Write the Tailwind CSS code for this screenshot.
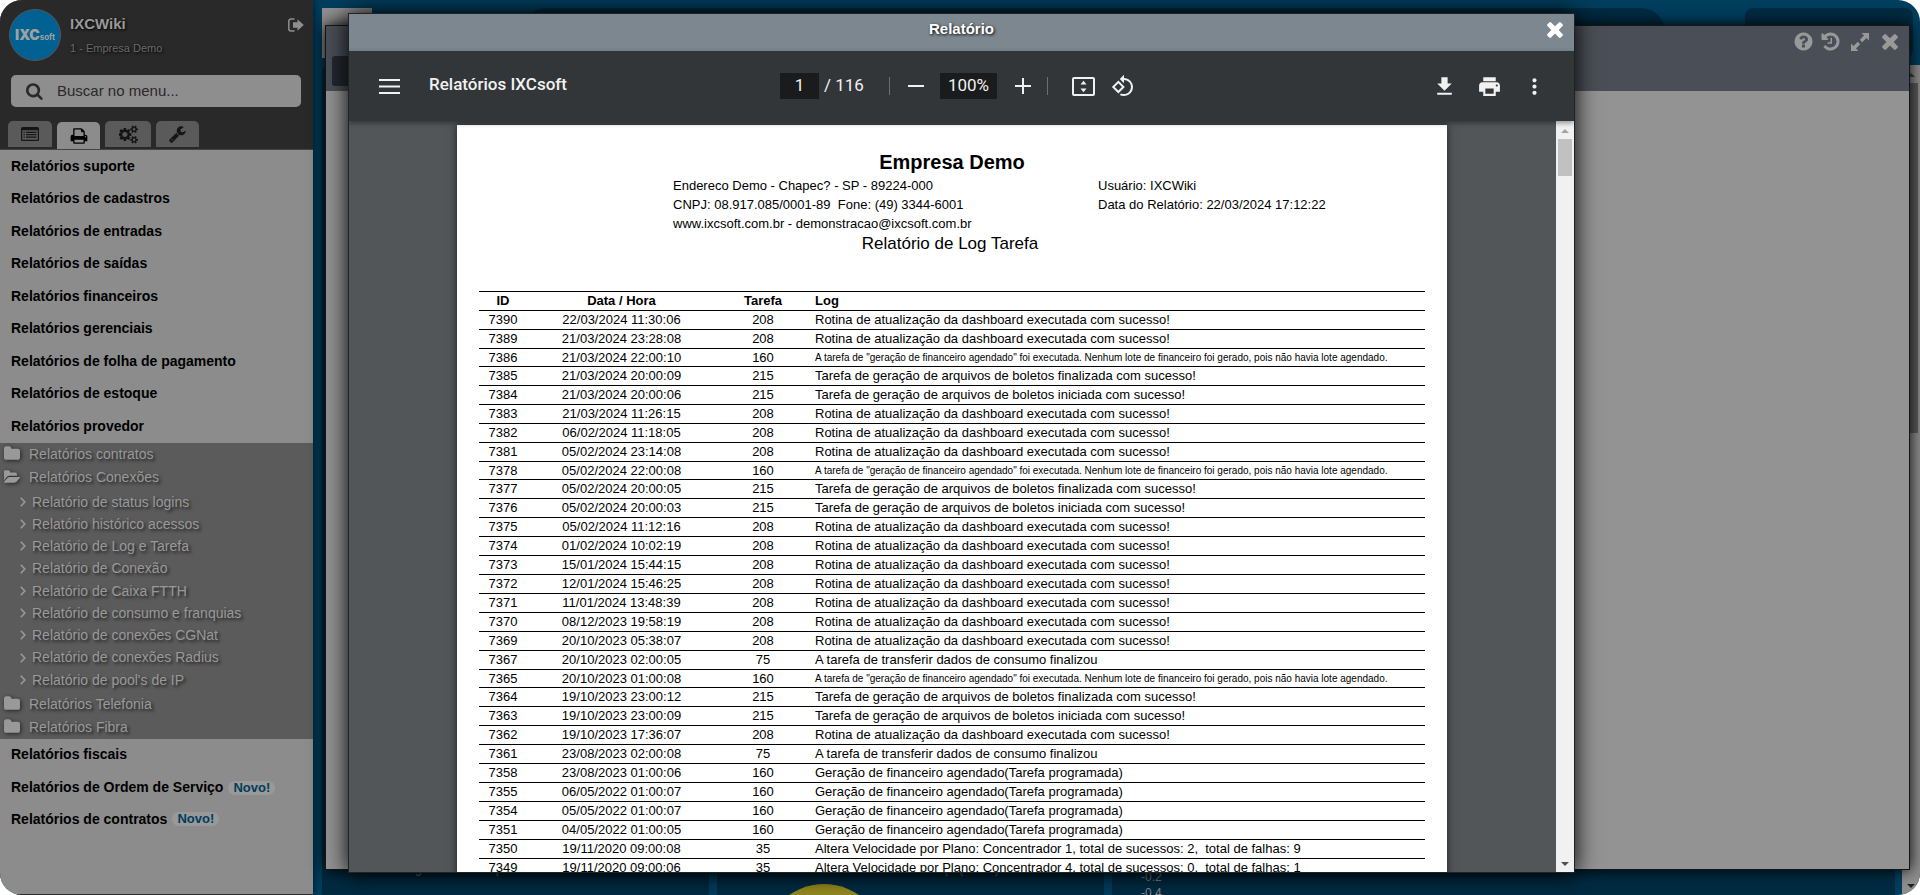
<!DOCTYPE html>
<html lang="pt-BR">
<head>
<meta charset="utf-8">
<title>Relatórios IXCsoft</title>
<script src="https://cdn.jsdelivr.net/npm/@tailwindcss/browser@4"></script>
</head>
<body class="bg-white font-['Liberation_Sans',Arial,sans-serif]">
<div class="relative flex h-screen overflow-hidden rounded-[22px] bg-[#003e5e]">

  <!-- Sidebar -->
  <aside class="relative z-10 flex w-[313px] shrink-0 flex-col border-b border-[#292929] bg-[#8c8c8c] shadow-[0_0_8px_#000a]">
    <header class="flex h-[149px] shrink-0 flex-col bg-[#292929]">
      <div class="flex items-start gap-[9px] pt-[9px] pr-[9px] pl-[9px]">
        <div class="flex size-[52px] items-center justify-center rounded-full border border-[#555] bg-[#006192] text-[#a0a0a0]">
          <span class="font-['Inter',sans-serif] text-[14px] leading-none font-black">IXC</span><span class="pt-1 font-['Inter',sans-serif] text-[8px] leading-none font-bold">soft</span>
        </div>
        <div class="flex-1 pt-[5px]">
          <h1 class="text-[15px] leading-5 font-bold text-[#999] [text-shadow:1px_1px_3px_#000]">IXCWiki</h1>
          <p class="pt-[6px] text-[11px] leading-4 text-[#6a6a6a] [text-shadow:1px_1px_3px_#000]">1 - Empresa Demo</p>
        </div>
        <button aria-label="Sair" class="mt-[8px]"><svg class="h-4 w-4 text-[#8e8e8e]" viewBox="0 0 16 16" fill="currentColor"><path d="M6.500 2H3A2.200 2.200 0 0 0 .8 4.200v7.600A2.200 2.200 0 0 0 3 14h3.500" fill="none" stroke="currentColor" stroke-width="1.500"/><path d="M5 5.200h4.500V2.200L15.800 8l-6.300 5.800V10.800H5z"/></svg></button>
      </div>
      <label class="mx-[11px] mt-[14px] flex h-[34px] w-[290px] items-center gap-[13px] rounded-[5px] bg-[#8e8e8e] pl-[15px]">
        <svg class="size-[18px] shrink-0 text-[#292929]" viewBox="0 0 1792 1792" fill="currentColor"><path d="M1152 832q0-185-131.500-316.500t-316.500-131.500-316.500 131.500-131.500 316.500 131.500 316.500 316.500 131.500 316.500-131.500 131.500-316.500zm512 832q0 52-38 90t-90 38q-54 0-90-38l-343-342q-179 124-399 124-143 0-273.500-55.500t-225-150-150-225-55.500-273.500 55.500-273.500 150-225 225-150 273.500-55.500 273.500 55.500 225 150 150 225 55.500 273.500q0 220-124 399l343 343q37 37 37 90z"/></svg>
        <input type="text" placeholder="Buscar no menu..." aria-label="Buscar no menu" class="min-w-0 flex-1 bg-transparent text-[15px] text-[#292929] outline-none placeholder:text-[#292929]">
      </label>
      <nav class="mt-[14px] flex items-start gap-[5px] pl-2 text-[#151515]">
        <button aria-label="Cadastros" class="flex h-[26px] w-11 items-center justify-center rounded-t-[5px] bg-[#5a5a5a]"><svg class="h-[14px] w-[18px]" viewBox="0 0 18 14" fill="currentColor"><path fill-rule="evenodd" d="M1.500 0h15A1.500 1.500 0 0 1 18 1.500v11a1.500 1.500 0 0 1-1.500 1.500h-15A1.500 1.500 0 0 1 0 12.500v-11A1.500 1.500 0 0 1 1.500 0zM1.200 3.200v9.200c0 .3.100.4.400.4h14.800c.3 0 .4-.1.400-.4V3.200z"/><path d="M2.500 4.700h1.300v1.200H2.500zM5 4.700h10.500v1.200H5zM2.500 7.100h1.300v1.200H2.500zM5 7.100h10.500v1.200H5zM2.500 9.500h1.300v1.200H2.500zM5 9.500h10.500v1.200H5z"/></svg></button>
        <button aria-label="Relatórios" class="relative mt-px flex h-[27px] w-[43px] items-center justify-center rounded-t-[5px] bg-[#8c8c8c] text-black"><svg class="size-[18px]" viewBox="-64 0 1792 1792" fill="currentColor"><path d="M384 1536h896v-256h-896v256zM384 896h896v-384h-160q-40 0-68-28t-28-68v-160h-640v640zM1536 960q0-26-19-45t-45-19-45 19-19 45 19 45 45 19 45-19 19-45zM1664 960v416q0 13-9.500 22.500t-22.500 9.500h-224v160q0 40-28 68t-68 28h-960q-40 0-68-28t-28-68v-160h-224q-13 0-22.500-9.500t-9.500-22.500v-416q0-79 56.500-135.500t135.500-56.500h64v-544q0-40 28-68t68-28h672q40 0 88 20t76 48l152 152q28 28 48 76t20 88v256h64q79 0 135.500 56.500t56.500 135.500z"/></svg></button>
        <button aria-label="Configurações" class="flex h-[26px] w-[46px] items-center justify-center rounded-t-[5px] bg-[#5a5a5a]"><svg class="size-[19px]" viewBox="0 0 1856 1792" fill="currentColor"><path d="M832 896q0-106-75-181t-181-75-181 75-75 181 75 181 181 75 181-75 75-181zm768 512q0-52-38-90t-90-38-90 38-38 90q0 53 37.500 90.500t90.500 37.500 90.500-37.500 37.500-90.500zm0-1024q0-52-38-90t-90-38-90 38-38 90q0 53 37.500 90.500t90.500 37.500 90.500-37.500 37.500-90.500zm-384 421v185q0 10-7 19.500t-16 10.500l-155 24q-11 35-32 76 34 48 90 115 7 11 7 20 0 12-7 19-23 30-82.500 89.500t-78.500 59.500q-11 0-21-7l-115-90q-37 19-77 31-11 108-23 155-7 24-30 24h-186q-11 0-20-7.500t-10-17.500l-23-153q-34-10-75-31l-118 89q-7 7-20 7-11 0-21-8-144-133-144-160 0-9 7-19 10-14 41-53t47-61q-23-44-35-82l-152-24q-10-1-17-9.500t-7-19.500v-185q0-10 7-19.500t16-10.500l155-24q11-35 32-76-34-48-90-115-7-11-7-20 0-12 7-20 22-30 82-89t79-59q11 0 21 7l115 90q34-18 77-32 11-108 23-154 7-24 30-24h186q11 0 20 7.500t10 17.500l23 153q34 10 75 31l118-89q8-7 20-7 11 0 21 8 144 133 144 160 0 8-7 19-12 16-42 54t-45 60q23 48 34 82l152 23q10 2 17 10.500t7 19.500zm640 533v140q0 16-149 31-12 27-30 52 51 113 51 138 0 4-4 7-122 71-124 71-8 0-46-47t-52-68q-20 2-30 2t-30-2q-14 21-52 68t-46 47q-2 0-124-71-4-3-4-7 0-25 51-138-18-25-30-52-149-15-149-31v-140q0-16 149-31 13-29 30-52-51-113-51-138 0-4 4-7 4-2 35-20t59-34 30-16q8 0 46 46.500t52 67.500q20-2 30-2t30 2q51-71 92-112l6-2q4 0 124 70 4 3 4 7 0 25-51 138 17 23 30 52 149 15 149 31zm0-1024v140q0 16-149 31-12 27-30 52 51 113 51 138 0 4-4 7-122 71-124 71-8 0-46-47t-52-68q-20 2-30 2t-30-2q-14 21-52 68t-46 47q-2 0-124-71-4-3-4-7 0-25 51-138-18-25-30-52-149-15-149-31v-140q0-16 149-31 13-29 30-52-51-113-51-138 0-4 4-7 4-2 35-20t59-34 30-16q8 0 46 46.500t52 67.500q20-2 30-2t30 2q51-71 92-112l6-2q4 0 124 70 4 3 4 7 0 25-51 138 17 23 30 52 149 15 149 31z"/></svg></button>
        <button aria-label="Ferramentas" class="flex h-[26px] w-[43px] items-center justify-center rounded-t-[5px] bg-[#5a5a5a]"><svg class="size-[18px]" viewBox="0 0 1792 1792" fill="currentColor"><path d="M384 1472q0-26-19-45t-45-19-45 19-19 45 19 45 45 19 45-19 19-45zm644-420l-682 682q-37 37-90 37-52 0-91-37l-106-108q-38-36-38-90 0-53 38-91l681-681q39 98 114.500 173.500t173.500 114.500zm634-435q0 39-23 106-47 134-164.500 217.500t-258.500 83.500q-185 0-316.500-131.500t-131.500-316.500 131.500-316.500 316.500-131.500q58 0 121.500 16.500t107.500 46.500q16 11 16 28t-16 28l-293 169v224l193 107q5-3 79-48.500t135.500-81 70.500-35.500q15 0 23.500 10t8.500 25z"/></svg></button>
      </nav>
    </header>

    <nav class="text-[14px]">
      <ul class="border-t border-[#444] font-bold text-black">
        <li class="odd:h-[33px] even:h-8"><a href="#" class="flex h-full items-center pb-px pl-[11px]">Relatórios suporte</a></li>
        <li class="odd:h-[33px] even:h-8"><a href="#" class="flex h-full items-center pb-px pl-[11px]">Relatórios de cadastros</a></li>
        <li class="odd:h-[33px] even:h-8"><a href="#" class="flex h-full items-center pb-px pl-[11px]">Relatórios de entradas</a></li>
        <li class="odd:h-[33px] even:h-8"><a href="#" class="flex h-full items-center pb-px pl-[11px]">Relatórios de saídas</a></li>
        <li class="odd:h-[33px] even:h-8"><a href="#" class="flex h-full items-center pb-px pl-[11px]">Relatórios financeiros</a></li>
        <li class="odd:h-[33px] even:h-8"><a href="#" class="flex h-full items-center pb-px pl-[11px]">Relatórios gerenciais</a></li>
        <li class="odd:h-[33px] even:h-8"><a href="#" class="flex h-full items-center pb-px pl-[11px]">Relatórios de folha de pagamento</a></li>
        <li class="odd:h-[33px] even:h-8"><a href="#" class="flex h-full items-center pb-px pl-[11px]">Relatórios de estoque</a></li>
        <li class="odd:h-[33px] even:h-8"><a href="#" class="flex h-full items-center pb-px pl-[11px]">Relatórios provedor</a></li>
      </ul>
      <ul id="submenu" class="bg-[#5b5b5b] text-[#999] [text-shadow:2px_2px_3px_#222]"></ul>
      <ul class="font-bold text-black">
        <li class="odd:h-[33px] even:h-8"><a href="#" class="flex h-full items-center pb-[3px] pl-[11px]">Relatórios fiscais</a></li>
        <li class="odd:h-[33px] even:h-8"><a href="#" class="flex h-full items-center gap-[5px] pb-px pl-[11px]">Relatórios de Ordem de Serviço <span class="rounded-full bg-[#999] px-[5px] text-[13px] leading-[14px] text-[#003c5c]">Novo!</span></a></li>
        <li class="odd:h-[33px] even:h-8"><a href="#" class="flex h-full items-center gap-[5px] pb-[3px] pl-[11px]">Relatórios de contratos <span class="rounded-full bg-[#999] px-[5px] text-[13px] leading-[14px] text-[#003c5c]">Novo!</span></a></li>
      </ul>
    </nav>
  </aside>

  <!-- Dashboard behind the windows -->
  <main class="flex min-w-0 flex-1 flex-col gap-[7px] pl-[9px]">
    <div class="flex h-[50px] shrink-0 gap-20 pt-2 pr-[7px]">
      <div class="size-[50px] shrink-0 bg-[#919191]"></div>
      <div class="ml-[70px] h-[50px] flex-1 rounded-[24px] bg-[#002b42]"></div>
      <div class="h-[50px] w-[168px] rounded-lg bg-[#002b42]"></div>
    </div>
    <div class="flex min-h-0 flex-1 pt-2">
      <div class="grid min-w-0 flex-1 grid-cols-[387px_387px_1fr] gap-2 pr-[7px] text-[12px] leading-4 text-[#888]">
        <section class="flex items-end gap-[74px] rounded-t-lg bg-[#002b42] pb-[18px] pl-[93px]"><p>g</p><p>p</p></section>
        <section class="flex flex-col justify-end gap-[7px] overflow-hidden rounded-t-lg bg-[#002b42]">
          <p class="flex pl-[226px]"><span class="w-4">ç</span><span class="w-9">(</span><span>)</span></p>
          <svg class="ml-[46px] h-[11px] w-[122px] shrink-0" viewBox="0 0 122 11"><circle cx="61" cy="61" r="61" fill="#93881f"/></svg>
        </section>
        <section class="flex items-end rounded-t-lg bg-[#002b42] pl-[29px]"><p class="-mb-[6px]">-0.2<br>-0.4</p></section>
      </div>
      <div class="flex w-[18px] shrink-0 flex-col items-center justify-between bg-[#8e8e8e] py-2 pb-[7px]">
        <div class="flex w-full flex-col items-center gap-[6px]">
          <svg class="h-1 w-2 text-[#444]" viewBox="0 0 8 4" fill="currentColor"><path d="M0 4L4 0l4 4z"/></svg>
          <div class="h-[350px] w-[14px] bg-[#5c5c5c]"></div>
        </div>
        <svg class="h-1 w-2 text-[#222]" viewBox="0 0 8 4" fill="currentColor"><path d="M0 0l4 4 4-4z"/></svg>
      </div>
    </div>
  </main>

  <!-- Background window -->
  <section class="absolute top-[25px] right-[10px] bottom-[25px] left-[325px] z-20 flex flex-col border border-[#151515] bg-[#939393] shadow-[0_0_15px_#000]">
    <header class="flex h-[65px] shrink-0 items-start justify-between bg-[#4a4f57] pt-[5px] pr-[11px] pl-[6px]">
      <div class="mt-[25px] h-[30px] w-24 rounded-[3px] bg-[#23282f]"></div>
      <div class="flex items-center text-[#999]">
        <button aria-label="Ajuda"><svg class="size-[21px]" viewBox="0 0 1792 1792" fill="currentColor"><path d="M1024 1376v-192q0-14-9-23t-23-9h-192q-14 0-23 9t-9 23v192q0 14 9 23t23 9h192q14 0 23-9t9-23zm256-672q0-88-55.500-163t-138.500-116-170-41q-243 0-371 213-15 24 8 42l132 100q7 6 19 6 16 0 25-12 53-68 86-92 34-24 86-24 48 0 85.500 26t37.500 59q0 38-20 61t-68 45q-63 28-115.500 86.500t-52.500 125.500v36q0 14 9 23t23 9h192q14 0 23-9t9-23q0-19 21.500-49.500t54.500-49.500q32-18 49-28.500t46-35 44.500-48 28-60.500 12.500-81zm384 192q0 209-103 385.500t-279.500 279.500-385.500 103-385.500-103-279.500-279.500-103-385.500 103-385.500 279.500-279.500 385.500-103 385.500 103 279.500 279.500 103 385.500z"/></svg></button>
        <button aria-label="Histórico" class="ml-[6px]"><svg class="size-[21px]" viewBox="0 0 1792 1792" fill="currentColor"><path d="M1664 896q0 156-61 298t-164 245-245 164-298 61q-172 0-327-72.500t-264-204.500q-7-10-6.500-22.500t8.500-20.500l137-138q10-9 25-9 16 2 23 12 73 95 179 147t225 52q104 0 198.500-40.500t163.500-109.500 109.500-163.500 40.500-198.500-40.500-198.500-109.500-163.500-163.500-109.500-198.500-40.500q-98 0-188 35.500t-160 101.500l137 138q31 30 14 69-17 40-59 40h-448q-26 0-45-19t-19-45v-448q0-42 40-59 39-17 69 14l130 129q107-101 244.500-156.500t284.500-55.500q156 0 298 61t245 164 164 245 61 298zm-640-288v448q0 14-9 23t-23 9h-320q-14 0-23-9t-9-23v-64q0-14 9-23t23-9h224v-352q0-14 9-23t23-9h64q14 0 23 9t9 23z"/></svg></button>
        <button aria-label="Expandir" class="ml-[10px]"><svg class="size-[18px]" viewBox="0 0 18 18" fill="currentColor"><path d="M10.500 0H18v7.500l-2.500-2.500-4.300 4.200-2.400-2.400L13 2.500zM7.500 18H0v-7.500L2.500 13l4.300-4.200 2.400 2.400L5 15.500z"/></svg></button>
        <button aria-label="Fechar janela" class="ml-[13px]"><svg class="size-4" viewBox="296 362 1200 1200" fill="currentColor"><path d="M1490 1322q0 40-28 68l-136 136q-28 28-68 28t-68-28l-294-294-294 294q-28 28-68 28t-68-28l-136-136q-28-28-28-68t28-68l294-294-294-294q-28-28-28-68t28-68l136-136q28-28 68-28t68 28l294 294 294-294q28-28 68-28t68 28l136 136q28 28 28 68t-28 68l-294 294 294 294q28 28 28 68z"/></svg></button>
      </div>
    </header>
  </section>

  <!-- Report window -->
  <section role="dialog" aria-label="Relatório" class="absolute top-[13px] right-[345px] bottom-[22px] left-[348px] z-30 flex flex-col overflow-hidden border border-[#1f2327] bg-[#525659] shadow-[0_0_22px_#000]">
    <header class="grid h-[37px] shrink-0 grid-cols-[1fr_auto_1fr] items-start bg-[#7d8790] px-[11px] pt-[5px] text-white">
      <span></span>
      <h2 class="text-[15px] leading-5 font-bold [text-shadow:1px_1px_3px_#000]">Relatório</h2>
      <button aria-label="Fechar" class="mt-[3px] justify-self-end"><svg class="size-4" viewBox="296 362 1200 1200" fill="currentColor"><path d="M1490 1322q0 40-28 68l-136 136q-28 28-68 28t-68-28l-294-294-294 294q-28 28-68 28t-68-28l-136-136q-28-28-28-68t28-68l294-294-294-294q-28-28-28-68t28-68l136-136q28-28 68-28t68 28l294 294 294-294q28-28 68-28t68 28l136 136q28 28 28 68t-28 68l-294 294 294 294q28 28 28 68z"/></svg></button>
    </header>

    <div class="relative z-10 grid h-[70px] shrink-0 grid-cols-[431px_1fr_auto] items-center bg-[#323639] font-['Roboto',sans-serif] text-[17px] text-[#f1f1f1] shadow-[0_2px_5px_#0006]">
      <div class="flex items-center gap-[29px] pl-[30px]">
        <button aria-label="Menu"><svg class="h-[15px] w-[21px]" viewBox="0 0 21 15" fill="currentColor"><path d="M0 0h21v2H0zM0 6.500h21v2H0zM0 13h21v2H0z"/></svg></button>
        <h3 class="pb-[3px] font-medium">Relatórios IXCsoft</h3>
      </div>
      <div class="flex items-center">
        <input type="text" value="1" aria-label="Página" class="h-[26px] w-[39px] bg-[#191b1c] pb-[3px] text-center outline-none">
        <span class="ml-[5px] w-10">/ 116</span>
        <span class="ml-[25px] h-[18px] w-px bg-[#6c6f72]"></span>
        <button aria-label="Diminuir zoom" class="ml-[18px]"><svg class="size-4" viewBox="0 0 16 16" fill="currentColor"><path d="M0 7h16v2H0z"/></svg></button>
        <input type="text" value="100%" aria-label="Zoom" class="ml-4 h-[26px] w-[57px] bg-[#191b1c] pb-[3px] text-center outline-none">
        <button aria-label="Aumentar zoom" class="ml-[18px]"><svg class="size-4" viewBox="0 0 16 16" fill="currentColor"><path d="M0 7h7V0h2v7h7v2H9v7H7V9H0z"/></svg></button>
        <span class="ml-4 h-[18px] w-px bg-[#6c6f72]"></span>
        <button aria-label="Ajustar à página" class="ml-6"><svg class="h-[19px] w-[23px]" viewBox="0 0 23 19" fill="currentColor"><path fill-rule="evenodd" d="M2 0h19a2 2 0 0 1 2 2v15a2 2 0 0 1-2 2H2a2 2 0 0 1-2-2V2a2 2 0 0 1 2-2zm0 2v15h19V2z"/><path d="M8.500 7.500l3-3.800 3 3.800zM8.500 11.500l3 3.800 3-3.800z"/></svg></button>
        <button aria-label="Girar" class="ml-4"><svg class="size-6" viewBox="0 0 24 24" fill="currentColor"><path d="M7.340 6.410L.860 12.900l6.490 6.480 6.490-6.480-6.500-6.490zM3.690 12.900l3.660-3.660L11 12.900l-3.660 3.660-3.650-3.660zm15.670-6.260C17.610 4.880 15.300 4 13 4V.760L8.760 5 13 9.240V6c1.790 0 3.580.680 4.950 2.050 2.730 2.730 2.730 7.170 0 9.900C16.580 19.320 14.790 20 13 20c-.970 0-1.940-.210-2.840-.610l-1.490 1.490C10.020 21.620 11.510 22 13 22c2.300 0 4.610-.880 6.360-2.640 3.520-3.510 3.520-9.210 0-12.720z"/></svg></button>
      </div>
      <div class="flex items-center gap-5 pr-[27px]">
        <button aria-label="Baixar"><svg class="size-[25px]" viewBox="0 0 24 24" fill="currentColor"><path d="M19 9h-4V3H9v6H5l7 7 7-7zM5 18v2h14v-2H5z"/></svg></button>
        <button aria-label="Imprimir"><svg class="size-[25px]" viewBox="0 0 24 24" fill="currentColor"><path d="M19 8H5c-1.660 0-3 1.340-3 3v6h4v4h12v-4h4v-6c0-1.660-1.340-3-3-3zm-3 11H8v-5h8v5zm3-7c-.550 0-1-.450-1-1s.450-1 1-1 1 .450 1 1-.450 1-1 1zm-1-9H6v4h12V3z"/></svg></button>
        <button aria-label="Mais ações"><svg class="size-[25px]" viewBox="0 0 24 24" fill="currentColor"><path d="M12 8c1.100 0 2-.9 2-2s-.9-2-2-2-2 .9-2 2 .9 2 2 2zm0 2c-1.100 0-2 .9-2 2s.9 2 2 2 2-.9 2-2-.9-2-2-2zm0 6c-1.100 0-2 .9-2 2s.9 2 2 2 2-.9 2-2-.9-2-2-2z"/></svg></button>
      </div>
    </div>

    <div class="flex min-h-0 flex-1">
      <div class="flex min-w-0 flex-1 justify-center overflow-hidden pt-1 pr-px">
        <article class="h-[1400px] w-[990px] shrink-0 bg-white px-[22px] pt-[25px] text-[13px] text-black shadow-[0_0_8px_#0009]">
          <h1 class="text-center text-[20px] leading-6 font-bold">Empresa Demo</h1>
          <div class="grid grid-cols-[425px_1fr] pt-[2px] pl-[194px] leading-[19px]">
            <div>
              <p>Endereco Demo - Chapec? - SP - 89224-000</p>
              <p>CNPJ: 08.917.085/0001-89&nbsp; Fone: (49) 3344-6001</p>
              <p>www.ixcsoft.com.br - demonstracao@ixcsoft.com.br</p>
            </div>
            <div>
              <p>Usuário: IXCWiki</p>
              <p>Data do Relatório: 22/03/2024 17:12:22</p>
            </div>
          </div>
          <h2 class="pr-1 text-center text-[17px] leading-[22px]">Relatório de Log Tarefa</h2>
          <table class="mt-9 w-full table-fixed border-collapse text-center">
            <thead>
              <tr class="h-[19px] border-y border-black leading-[18px]">
                <th class="w-12 p-0">ID</th>
                <th class="w-[189px] p-0">Data / Hora</th>
                <th class="w-[94px] p-0">Tarefa</th>
                <th class="p-0 pl-[5px] text-left">Log</th>
              </tr>
            </thead>
            <tbody id="rows"></tbody>
          </table>
        </article>
      </div>
      <div class="flex w-[18px] shrink-0 flex-col items-center justify-between bg-[#f1f1f1] pt-2 pb-[6px]">
        <div class="flex flex-col items-center gap-[6px]">
          <svg class="h-1 w-2 text-[#a3a3a3]" viewBox="0 0 8 4" fill="currentColor"><path d="M0 4L4 0l4 4z"/></svg>
          <div class="h-[37px] w-[14px] bg-[#c1c1c1]"></div>
        </div>
        <svg class="h-1 w-2 text-[#505050]" viewBox="0 0 8 4" fill="currentColor"><path d="M0 0l4 4 4-4z"/></svg>
      </div>
    </div>
  </section>
</div>

<script>
  const dash = 'Rotina de atualização da dashboard executada com sucesso!';
  const fin = 'A tarefa de "geração de financeiro agendado" foi executada. Nenhum lote de financeiro foi gerado, pois não havia lote agendado.';
  const end = 'Tarefa de geração de arquivos de boletos finalizada com sucesso!';
  const ini = 'Tarefa de geração de arquivos de boletos iniciada com sucesso!';
  const use = 'A tarefa de transferir dados de consumo finalizou';
  const ger = 'Geração de financeiro agendado(Tarefa programada)';
  const rows = [
    [7390, '22/03/2024 11:30:06', 208, dash], [7389, '21/03/2024 23:28:08', 208, dash],
    [7386, '21/03/2024 22:00:10', 160, fin], [7385, '21/03/2024 20:00:09', 215, end],
    [7384, '21/03/2024 20:00:06', 215, ini], [7383, '21/03/2024 11:26:15', 208, dash],
    [7382, '06/02/2024 11:18:05', 208, dash], [7381, '05/02/2024 23:14:08', 208, dash],
    [7378, '05/02/2024 22:00:08', 160, fin], [7377, '05/02/2024 20:00:05', 215, end],
    [7376, '05/02/2024 20:00:03', 215, ini], [7375, '05/02/2024 11:12:16', 208, dash],
    [7374, '01/02/2024 10:02:19', 208, dash], [7373, '15/01/2024 15:44:15', 208, dash],
    [7372, '12/01/2024 15:46:25', 208, dash], [7371, '11/01/2024 13:48:39', 208, dash],
    [7370, '08/12/2023 19:58:19', 208, dash], [7369, '20/10/2023 05:38:07', 208, dash],
    [7367, '20/10/2023 02:00:05', 75, use], [7365, '20/10/2023 01:00:08', 160, fin],
    [7364, '19/10/2023 23:00:12', 215, end], [7363, '19/10/2023 23:00:09', 215, ini],
    [7362, '19/10/2023 17:36:07', 208, dash], [7361, '23/08/2023 02:00:08', 75, use],
    [7358, '23/08/2023 01:00:06', 160, ger], [7355, '06/05/2022 01:00:07', 160, ger],
    [7354, '05/05/2022 01:00:07', 160, ger], [7351, '04/05/2022 01:00:05', 160, ger],
    [7350, '19/11/2020 09:00:08', 35, 'Altera Velocidade por Plano: Concentrador 1, total de sucessos: 2,&nbsp; total de falhas: 9'],
    [7349, '19/11/2020 09:00:06', 35, 'Altera Velocidade por Plano: Concentrador 4, total de sucessos: 0,&nbsp; total de falhas: 1'],
  ];
  document.getElementById('rows').innerHTML = rows.map(([id, date, task, log]) => {
    const long = log === fin;
    return `<tr class="border-b border-black ${long ? 'leading-[17px]' : 'leading-[18px]'}">
      <td class="p-0">${id}</td><td class="p-0">${date}</td><td class="p-0">${task}</td>
      <td class="${long ? 'p-0 pl-[5px] text-left text-[10px] whitespace-nowrap' : 'p-0 pl-[5px] text-left whitespace-nowrap'}">${log}</td></tr>`;
  }).join('');

  const closed = '<svg class="size-4 drop-shadow-[1px_1px_2px_#222]" viewBox="64 100 1664 1664" fill="currentColor"><path d="M1728 608v704q0 92-66 158t-158 66h-1216q-92 0-158-66t-66-158v-960q0-92 66-158t158-66h320q92 0 158 66t66 158v32h672q92 0 158 66t66 158z"/></svg>';
  const open = '<svg class="size-4 drop-shadow-[1px_1px_2px_#222]" viewBox="0 0 1815 1792" fill="currentColor"><path d="M1815 952q0 31-31 66l-336 396q-43 51-120.500 86.500t-143.500 35.500h-1088q-34 0-60.500-13t-26.500-43q0-31 31-66l336-396q43-51 120.500-86.500t143.500-35.500h1088q34 0 60.500 13t26.500 43zm-343-344v160h-832q-94 0-197 47.500t-164 119.500l-337 396-5 6q0-4-.5-12.500t-.5-12.500v-960q0-92 66-158t158-66h320q92 0 158 66t66 158v32h544q92 0 158 66t66 158z"/></svg>';
  const folder = (name, icon, inner = '') => `<li><a href="#" class="flex h-[23px] items-center gap-[9px] pb-px pl-1">${icon}<span>${name}</span></a>${inner}</li>`;
  const item = name => `<li class="h-[22px] nth-[4n]:h-[23px]"><a href="#" class="flex h-full items-center gap-[6px] pl-5"><svg class="h-[10px] w-[6px]" viewBox="0 0 6 10" fill="none" stroke="currentColor" stroke-width="1.600"><path d="M.8.800L4.800 5 .8 9.200"/></svg>${name}</a></li>`;
  const items = ['Relatório de status logins', 'Relatório histórico acessos', 'Relatório de Log e Tarefa', 'Relatório de Conexão', 'Relatório de Caixa FTTH', 'Relatório de consumo e franquias', 'Relatório de conexões CGNat', 'Relatório de conexões Radius', "Relatório de pool's de IP"];
  document.getElementById('submenu').innerHTML =
    folder('Relatórios contratos', closed) +
    folder('Relatórios Conexões', open, `<ul class="py-[2px]">${items.map(item).join('')}</ul>`) +
    folder('Relatórios Telefonia', closed) + folder('Relatórios Fibra', closed);
</script>
</body>
</html>
